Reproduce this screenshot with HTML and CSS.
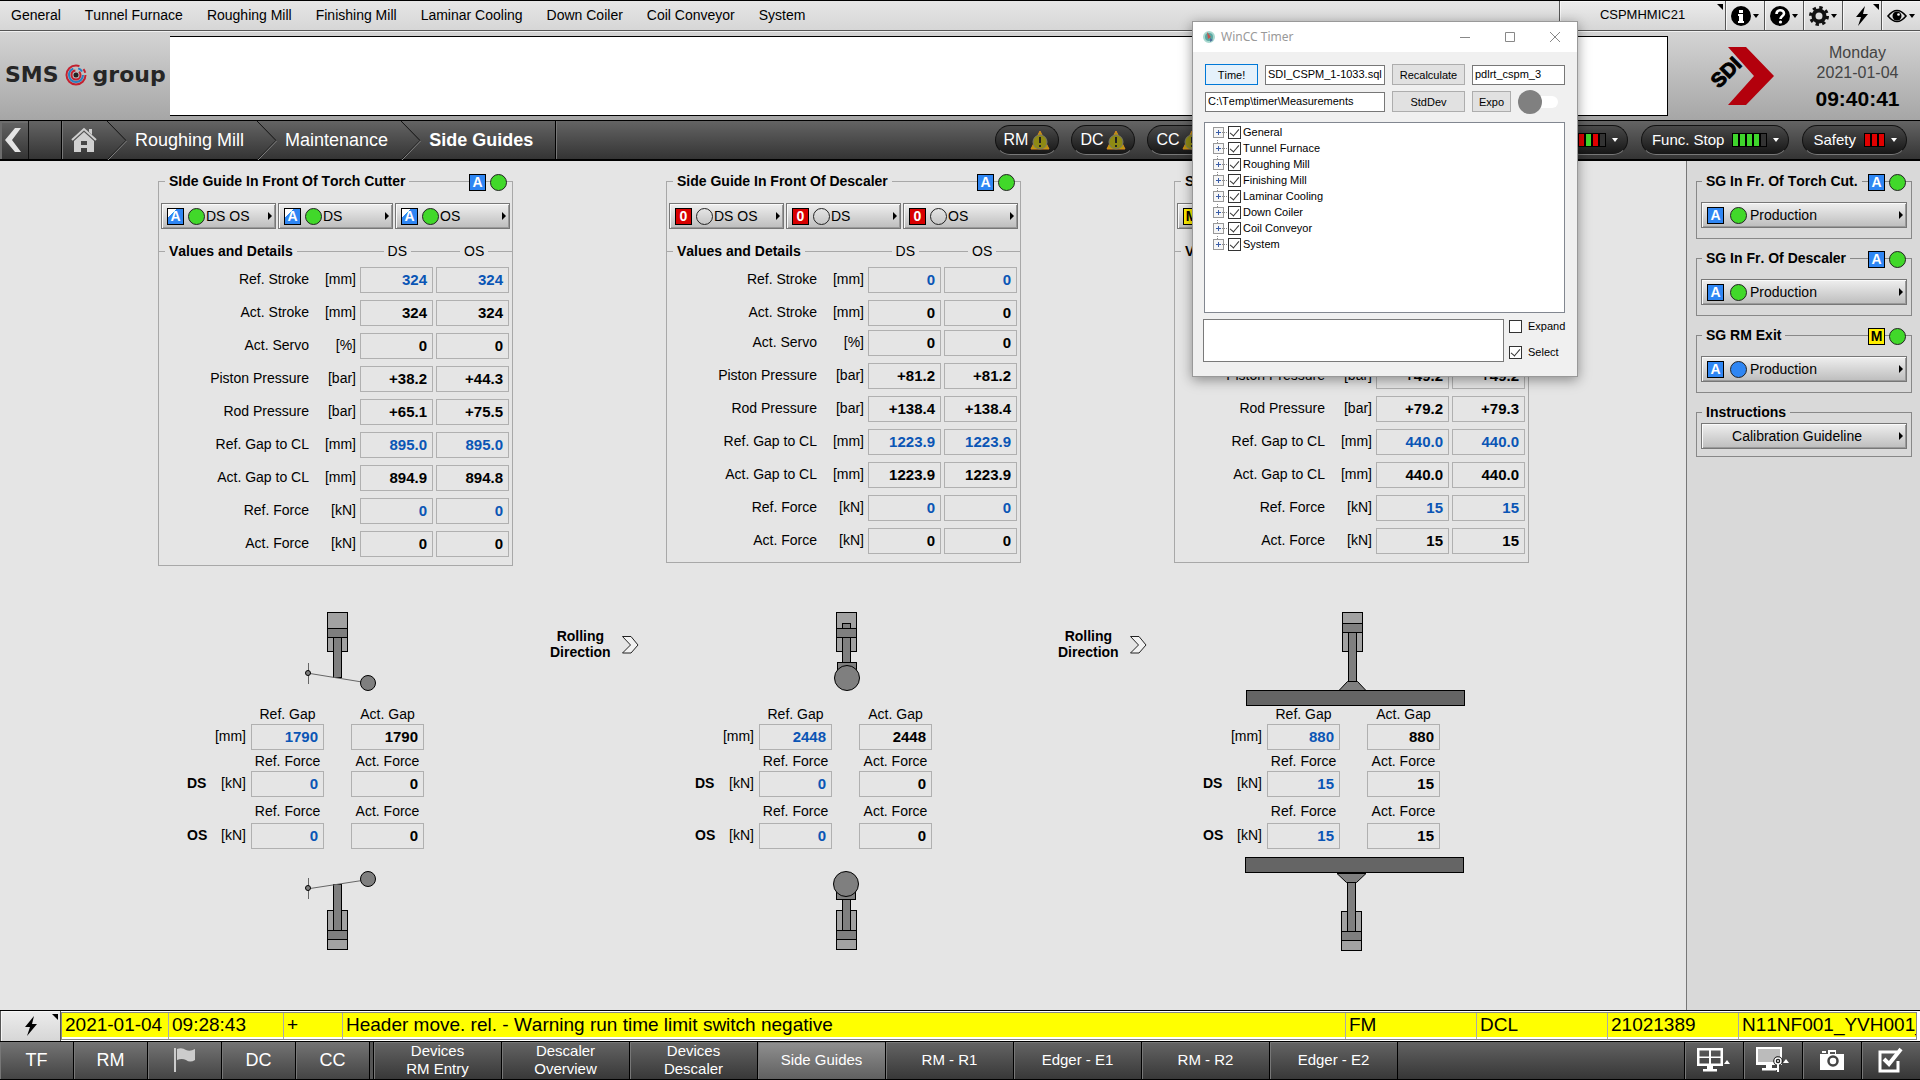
FILE: index.html
```html
<!DOCTYPE html>
<html lang="en">
<head>
<meta charset="utf-8">
<title>Side Guides</title>
<meta name="viewport" content="width=device-width, initial-scale=1">
<link rel="stylesheet" href="styles.css">
</head>
<body>
<svg class="defs" aria-hidden="true">
  <defs>
    <symbol id="warn" viewBox="0 0 20 20">
      <path d="M10 1 L19 19 H1 Z" fill="#b39a08" stroke="#d98a1e" stroke-width="1"/>
      <circle cx="10" cy="12" r="7" fill="#8f8a14" stroke="#77776a" stroke-width="1"/>
      <rect x="9" y="7" width="2" height="6" fill="#222"/><rect x="9" y="15" width="2" height="2" fill="#222"/>
    </symbol>
    <symbol id="bolt" viewBox="0 0 16 20">
      <path d="M11 0 L2 11 H7 L4 20 L14 8 H9 Z" fill="#000"/>
    </symbol>
    <symbol id="chevron" viewBox="0 0 20 39">
      <path d="M0 0 L19 19.500 L0 39" fill="none" stroke="#111"/>
      <path d="M1 39 L20 19.500" fill="none" stroke="#888"/>
    </symbol>
    <symbol id="rolling" viewBox="0 0 17 18">
      <path d="M.5 .5 H9 L16 9 L9 17 H.5 L8.500 9 Z" fill="#f2f2f2" stroke="#222"/>
    </symbol>
  </defs>
</svg>

<header>
  <div class="menubar">
    <nav class="menu" aria-label="Main menu">
      <a href="#">General</a><a href="#">Tunnel Furnace</a><a href="#">Roughing Mill</a><a href="#">Finishing Mill</a><a href="#">Laminar Cooling</a><a href="#">Down Coiler</a><a href="#">Coil Conveyor</a><a href="#">System</a>
    </nav>
    <button type="button" class="tool host corner">CSPMHMIC21</button>
    <button type="button" class="tool" aria-label="Information">
      <svg width="20" height="20" viewBox="0 0 20 20"><circle cx="10" cy="10" r="10"/><path d="M8 4h4v3H8zM7 8h5v7h1v2H7v-2h1v-5H7z" fill="#fff"/></svg><i class="down"></i>
    </button>
    <button type="button" class="tool" aria-label="Help">
      <svg width="20" height="20" viewBox="0 0 20 20"><circle cx="10" cy="10" r="10"/><path d="M6.500 8 C6.500 3 14 3 14 7.500 C14 10 10.500 10 10.500 13" fill="none" stroke="#fff" stroke-width="2.600"/><circle cx="10.500" cy="16" r="1.600" fill="#fff"/></svg><i class="down"></i>
    </button>
    <button type="button" class="tool" aria-label="Settings">
      <svg width="20" height="20" viewBox="0 0 20 20"><circle cx="10" cy="10" r="8.500" fill="none" stroke="#111" stroke-width="3" stroke-dasharray="3.340 3.340"/><circle cx="10" cy="10" r="5.500" fill="#ddd" stroke="#111" stroke-width="4"/></svg><i class="down"></i>
    </button>
    <button type="button" class="tool corner" aria-label="Events"><svg width="16" height="20"><use href="#bolt"/></svg></button>
    <button type="button" class="tool" aria-label="View">
      <svg width="20" height="14" viewBox="0 0 20 14"><path d="M1 7 Q10 -4 19 7 Q10 18 1 7Z" fill="none" stroke="#000" stroke-width="1.600"/><circle cx="10" cy="7" r="4.500"/><circle cx="11.500" cy="5.500" r="1.300" fill="#fff"/></svg><i class="down"></i>
    </button>
  </div>

  <div class="banner">
    <div class="sms">
      <span>SMS</span>
      <svg width="22" height="22" viewBox="0 0 22 22"><g fill="none" stroke-width="2"><circle cx="11" cy="11" r="9.500" stroke="#c4202f" stroke-dasharray="48 5 4 3"/><circle cx="11" cy="11" r="7" stroke="#2a7fc0" stroke-dasharray="30 5 5 4"/><circle cx="11" cy="11" r="4.500" stroke="#c4202f" stroke-dasharray="20 4"/></g><circle cx="11" cy="11" r="2.500" fill="#222"/></svg>
      <span>group</span>
    </div>
    <div class="message"></div>
    <svg class="sdi" width="72" height="60" viewBox="0 0 72 60" role="img" aria-label="SDI">
      <path d="M25 1 H43 L71 30 L43 59 H25 L51 30 Z" fill="#b3000c"/>
      <text x="16" y="43" transform="rotate(-45 16 43)" class="sdi-text">SDI</text>
    </svg>
    <div class="clock">
      <span>Monday</span><span>2021-01-04</span><strong>09:40:41</strong>
    </div>
  </div>

  <div class="navbar">
    <button type="button" class="back" aria-label="Back"><svg width="18" height="26" viewBox="0 0 18 26"><path d="M11 1 H17 L8 13 L17 25 H11 L1 13 Z" fill="#e4e4e4"/></svg></button>
    <div class="slot"></div>
    <nav class="crumbs" aria-label="Breadcrumb">
      <a href="#" class="home" aria-label="Home"><svg width="26" height="26" viewBox="0 0 26 26"><path d="M1 13 L13 2 L25 13" fill="none" stroke="#d0d0d0" stroke-width="2"/><path d="M18 2h3v6l-3-3z" fill="#d0d0d0"/><path d="M3 14 L13 5 L23 14 V25 H16 V21 H10 V25 H3 Z M10 14 V18 H16 V14 Z" fill="#d0d0d0" fill-rule="evenodd"/></svg></a>
      <svg width="20" height="39"><use href="#chevron"/></svg>
      <a href="#">Roughing Mill</a>
      <svg width="20" height="39"><use href="#chevron"/></svg>
      <a href="#">Maintenance</a>
      <svg width="20" height="39"><use href="#chevron"/></svg>
      <a href="#" class="here" aria-current="page">Side Guides</a>
    </nav>
    <div class="alerts">
      <button type="button" class="pill">RM<svg width="20" height="20"><use href="#warn"/></svg></button>
      <button type="button" class="pill">DC<svg width="20" height="20"><use href="#warn"/></svg></button>
      <button type="button" class="pill">CC<svg width="20" height="20"><use href="#warn"/></svg></button>
    </div>
    <div class="states">
      <button type="button" class="pill state" aria-label="Stops"><span class="bars"><b class="r"></b><b class="g"></b><b class="r"></b><b></b></span><i class="down"></i></button>
      <button type="button" class="pill state">Func. Stop<span class="bars"><b class="g"></b><b class="g"></b><b class="g"></b><b class="g"></b><b></b></span><i class="down"></i></button>
      <button type="button" class="pill state">Safety<span class="bars"><b class="r"></b><b class="r"></b><b class="r"></b></span><i class="down"></i></button>
    </div>
  </div>
</header>

<main>
  <div class="stage">
    <fieldset class="panel">
      <legend>SIde Guide In Front Of Torch Cutter</legend>
      <div class="badges"><span class="mode auto">A</span><span class="lamp on"></span></div>
      <div class="modes">
        <button type="button" class="key"><span class="mode auto cut">A</span><span class="lamp on"></span>DS OS</button>
        <button type="button" class="key"><span class="mode auto cut">A</span><span class="lamp on"></span>DS</button>
        <button type="button" class="key"><span class="mode auto cut">A</span><span class="lamp on"></span>OS</button>
      </div>
      <div class="heads"><strong>Values and Details</strong><span>DS</span><span>OS</span></div>
      <table class="values">
        <tr class="ref"><th scope="row">Ref. Stroke</th><td>[mm]</td><td><output>324</output></td><td><output>324</output></td></tr>
        <tr><th scope="row">Act. Stroke</th><td>[mm]</td><td><output>324</output></td><td><output>324</output></td></tr>
        <tr><th scope="row">Act. Servo</th><td>[%]</td><td><output>0</output></td><td><output>0</output></td></tr>
        <tr><th scope="row">Piston Pressure</th><td>[bar]</td><td><output>+38.2</output></td><td><output>+44.3</output></td></tr>
        <tr><th scope="row">Rod Pressure</th><td>[bar]</td><td><output>+65.1</output></td><td><output>+75.5</output></td></tr>
        <tr class="ref"><th scope="row">Ref. Gap to CL</th><td>[mm]</td><td><output>895.0</output></td><td><output>895.0</output></td></tr>
        <tr><th scope="row">Act. Gap to CL</th><td>[mm]</td><td><output>894.9</output></td><td><output>894.8</output></td></tr>
        <tr class="ref"><th scope="row">Ref. Force</th><td>[kN]</td><td><output>0</output></td><td><output>0</output></td></tr>
        <tr><th scope="row">Act. Force</th><td>[kN]</td><td><output>0</output></td><td><output>0</output></td></tr>
      </table>
    </fieldset>

    <fieldset class="panel">
      <legend>Side Guide In Front Of Descaler</legend>
      <div class="badges"><span class="mode auto">A</span><span class="lamp on"></span></div>
      <div class="modes">
        <button type="button" class="key"><span class="mode zero">0</span><span class="lamp"></span>DS OS</button>
        <button type="button" class="key"><span class="mode zero">0</span><span class="lamp"></span>DS</button>
        <button type="button" class="key"><span class="mode zero">0</span><span class="lamp"></span>OS</button>
      </div>
      <div class="heads"><strong>Values and Details</strong><span>DS</span><span>OS</span></div>
      <table class="values dense">
        <tr class="ref"><th scope="row">Ref. Stroke</th><td>[mm]</td><td><output>0</output></td><td><output>0</output></td></tr>
        <tr><th scope="row">Act. Stroke</th><td>[mm]</td><td><output>0</output></td><td><output>0</output></td></tr>
        <tr><th scope="row">Act. Servo</th><td>[%]</td><td><output>0</output></td><td><output>0</output></td></tr>
        <tr><th scope="row">Piston Pressure</th><td>[bar]</td><td><output>+81.2</output></td><td><output>+81.2</output></td></tr>
        <tr><th scope="row">Rod Pressure</th><td>[bar]</td><td><output>+138.4</output></td><td><output>+138.4</output></td></tr>
        <tr class="ref"><th scope="row">Ref. Gap to CL</th><td>[mm]</td><td><output>1223.9</output></td><td><output>1223.9</output></td></tr>
        <tr><th scope="row">Act. Gap to CL</th><td>[mm]</td><td><output>1223.9</output></td><td><output>1223.9</output></td></tr>
        <tr class="ref"><th scope="row">Ref. Force</th><td>[kN]</td><td><output>0</output></td><td><output>0</output></td></tr>
        <tr><th scope="row">Act. Force</th><td>[kN]</td><td><output>0</output></td><td><output>0</output></td></tr>
      </table>
    </fieldset>

    <fieldset class="panel">
      <legend>Side Guide RM Exit</legend>
      <div class="badges"><span class="mode manual">M</span><span class="lamp on"></span></div>
      <div class="modes">
        <button type="button" class="key"><span class="mode manual">M</span><span class="lamp on"></span>DS OS</button>
        <button type="button" class="key"><span class="mode manual">M</span><span class="lamp on"></span>DS</button>
        <button type="button" class="key"><span class="mode manual">M</span><span class="lamp on"></span>OS</button>
      </div>
      <div class="heads"><strong>Values and Details</strong><span>DS</span><span>OS</span></div>
      <table class="values dense">
        <tr class="ref"><th scope="row">Ref. Stroke</th><td>[mm]</td><td><output></output></td><td><output></output></td></tr>
        <tr><th scope="row">Act. Stroke</th><td>[mm]</td><td><output></output></td><td><output></output></td></tr>
        <tr><th scope="row">Act. Servo</th><td>[%]</td><td><output></output></td><td><output></output></td></tr>
        <tr><th scope="row">Piston Pressure</th><td>[bar]</td><td><output>+49.2</output></td><td><output>+49.2</output></td></tr>
        <tr><th scope="row">Rod Pressure</th><td>[bar]</td><td><output>+79.2</output></td><td><output>+79.3</output></td></tr>
        <tr class="ref"><th scope="row">Ref. Gap to CL</th><td>[mm]</td><td><output>440.0</output></td><td><output>440.0</output></td></tr>
        <tr><th scope="row">Act. Gap to CL</th><td>[mm]</td><td><output>440.0</output></td><td><output>440.0</output></td></tr>
        <tr class="ref"><th scope="row">Ref. Force</th><td>[kN]</td><td><output>15</output></td><td><output>15</output></td></tr>
        <tr><th scope="row">Act. Force</th><td>[kN]</td><td><output>15</output></td><td><output>15</output></td></tr>
      </table>
    </fieldset>

    <section class="station">
      <div class="machine">
        <svg class="drawing" width="300" height="91" viewBox="0 0 300 91">
          <g class="part">
            <rect class="cyl" x="169.500" y=".5" width="20" height="39"/><rect x="175.500" y="25.500" width="8" height="40"/><rect x="169.500" y="16.500" width="20" height="9"/>
            <path class="thin" d="M150.500 51v21M152 61.500 L204 70"/><circle cx="150" cy="61" r="2.500"/><circle cx="210" cy="71" r="7.500"/>
          </g>
        </svg>
        <dl class="gaps">
          <dt>Ref. Gap</dt><dt>Act. Gap</dt><dd class="unit">[mm]</dd><dd><output class="ref">1790</output></dd><dd><output>1790</output></dd>
          <dt>Ref. Force</dt><dt>Act. Force</dt><dd class="side">DS</dd><dd class="unit">[kN]</dd><dd><output class="ref">0</output></dd><dd><output>0</output></dd>
          <dt class="low">Ref. Force</dt><dt class="low">Act. Force</dt><dd class="side">OS</dd><dd class="unit">[kN]</dd><dd><output class="ref">0</output></dd><dd><output>0</output></dd>
        </dl>
        <svg class="drawing" width="300" height="104" viewBox="0 0 300 104">
          <g class="part">
            <rect class="cyl" x="169.500" y="61.500" width="20" height="39"/><rect x="175.500" y="35.500" width="8" height="46"/><rect x="169.500" y="81.500" width="20" height="9"/>
            <path class="thin" d="M150.500 29v21M152 39.500 L204 31.500"/><circle cx="150" cy="39" r="2.500"/><circle cx="210" cy="30" r="7.500"/>
          </g>
        </svg>
      </div>
      <p class="rolling">Rolling<br>Direction<svg width="17" height="18"><use href="#rolling"/></svg></p>
    </section>

    <section class="station">
      <div class="machine">
        <svg class="drawing" width="300" height="91" viewBox="0 0 300 91">
          <g class="part">
            <rect class="cyl" x="170.500" y=".5" width="20" height="39"/><rect x="176.500" y="11.500" width="8" height="40"/><rect x="170.500" y="16.500" width="20" height="9"/>
            <rect x="171.500" y="50.500" width="19" height="10"/><circle cx="181" cy="66" r="12.500"/>
          </g>
        </svg>
        <dl class="gaps">
          <dt>Ref. Gap</dt><dt>Act. Gap</dt><dd class="unit">[mm]</dd><dd><output class="ref">2448</output></dd><dd><output>2448</output></dd>
          <dt>Ref. Force</dt><dt>Act. Force</dt><dd class="side">DS</dd><dd class="unit">[kN]</dd><dd><output class="ref">0</output></dd><dd><output>0</output></dd>
          <dt class="low">Ref. Force</dt><dt class="low">Act. Force</dt><dd class="side">OS</dd><dd class="unit">[kN]</dd><dd><output class="ref">0</output></dd><dd><output>0</output></dd>
        </dl>
        <svg class="drawing" width="300" height="104" viewBox="0 0 300 104">
          <g class="part">
            <rect class="cyl" x="170.500" y="61.500" width="20" height="39"/><rect x="176.500" y="50.500" width="8" height="31"/><rect x="170.500" y="81.500" width="20" height="9"/>
            <rect x="170.500" y="40.500" width="19" height="10"/><circle cx="180" cy="35" r="12.500"/>
          </g>
        </svg>
      </div>
      <p class="rolling">Rolling<br>Direction<svg width="17" height="18"><use href="#rolling"/></svg></p>
    </section>

    <section class="station">
      <div class="machine">
        <svg class="drawing" width="300" height="91" viewBox="0 0 300 91">
          <g class="part">
            <rect class="cyl" x="168.500" y=".5" width="20" height="39"/><rect x="174.500" y="20.500" width="8" height="49"/><rect x="168.500" y="11.500" width="20" height="9"/>
            <path d="M173.500 69.500 H183.500 L192 78.500 H165 Z"/><rect class="plate" x="72.500" y="78.500" width="218" height="15"/>
          </g>
        </svg>
        <dl class="gaps">
          <dt>Ref. Gap</dt><dt>Act. Gap</dt><dd class="unit">[mm]</dd><dd><output class="ref">880</output></dd><dd><output>880</output></dd>
          <dt>Ref. Force</dt><dt>Act. Force</dt><dd class="side">DS</dd><dd class="unit">[kN]</dd><dd><output class="ref">15</output></dd><dd><output>15</output></dd>
          <dt class="low">Ref. Force</dt><dt class="low">Act. Force</dt><dd class="side">OS</dd><dd class="unit">[kN]</dd><dd><output class="ref">15</output></dd><dd><output>15</output></dd>
        </dl>
        <svg class="drawing" width="300" height="104" viewBox="0 0 300 104">
          <g class="part">
            <rect class="cyl" x="167.500" y="62.500" width="20" height="39"/><rect x="173.500" y="33.500" width="8" height="49"/><rect x="167.500" y="82.500" width="20" height="9"/>
            <path d="M163 24.500 H192 L182.500 33.500 H172.500 Z"/><rect class="plate" x="71.500" y="8.500" width="218" height="15"/>
          </g>
        </svg>
      </div>
    </section>
  </div>

  <aside>
    <fieldset class="group">
      <legend>SG In Fr. Of Torch Cut.</legend>
      <div class="badges"><span class="mode auto">A</span><span class="lamp on"></span></div>
      <button type="button" class="key wide"><span class="mode auto">A</span><span class="lamp on"></span>Production</button>
    </fieldset>
    <fieldset class="group">
      <legend>SG In Fr. Of Descaler</legend>
      <div class="badges"><span class="mode auto">A</span><span class="lamp on"></span></div>
      <button type="button" class="key wide"><span class="mode auto">A</span><span class="lamp on"></span>Production</button>
    </fieldset>
    <fieldset class="group">
      <legend>SG RM Exit</legend>
      <div class="badges"><span class="mode manual">M</span><span class="lamp on"></span></div>
      <button type="button" class="key wide"><span class="mode auto">A</span><span class="lamp run"></span>Production</button>
    </fieldset>
    <fieldset class="group plain">
      <legend>Instructions</legend>
      <button type="button" class="key wide centred">Calibration Guideline</button>
    </fieldset>
  </aside>
</main>

<footer>
  <div class="alarm">
    <button type="button" class="tool ack corner" aria-label="Alarms"><svg width="16" height="20"><use href="#bolt"/></svg></button>
    <table class="log">
      <tr><td>2021-01-04</td><td>09:28:43</td><td>+</td><td>Header move. rel. - Warning run time limit switch negative</td><td>FM</td><td>DCL</td><td>21021389</td><td>N11NF001_YVH001_</td></tr>
    </table>
  </div>
  <nav class="tabs" aria-label="Screens">
    <button type="button" class="area">TF</button>
    <button type="button" class="area">RM</button>
    <button type="button" class="area" aria-label="Flag"><svg width="24" height="26" viewBox="0 0 24 26"><path d="M2 1v24" stroke="#ccc" stroke-width="2"/><path d="M4 2 Q9 0 13 3 Q17 5 22 2 V13 Q17 16 13 13 Q9 11 4 13 Z" fill="#ccc"/></svg></button>
    <button type="button" class="area">DC</button>
    <button type="button" class="area">CC</button>
    <i class="divider"></i>
    <button type="button" class="page">Devices<br>RM Entry</button>
    <button type="button" class="page">Descaler<br>Overview</button>
    <button type="button" class="page">Devices<br>Descaler</button>
    <button type="button" class="page active" aria-current="page">Side Guides</button>
    <button type="button" class="page">RM - R1</button>
    <button type="button" class="page">Edger - E1</button>
    <button type="button" class="page">RM - R2</button>
    <button type="button" class="page">Edger - E2</button>
    <span class="fill"></span>
    <button type="button" class="icon" aria-label="Screen layout"><svg width="34" height="24" viewBox="0 0 34 24"><path d="M0 0h26v18H0z M2.500 2.500v6h9.500v-6z M14 2.500v6h9.500v-6z M2.500 10v5.500h9.500V10z M14 10v5.500h9.500V10z M10 18h6v3h4v2.500H6V21h4z" fill="#fff" fill-rule="evenodd"/><path d="M27 16h6l-3-4z" fill="#fff"/></svg></button>
    <button type="button" class="icon" aria-label="Screen access"><svg width="34" height="26" viewBox="0 0 34 26"><path d="M0 0h26v18H0z M10 18h6v3h4v2.500H6V21h4z" fill="#fff"/><path d="M2 2h22v13H2z" fill="#bbb"/><circle cx="22" cy="14" r="3" fill="#bbb" stroke="#111" stroke-width="3.500"/><circle cx="22" cy="14" r="3" fill="none" stroke="#fff" stroke-width="1.500"/><path d="M22 17v8M22 22h-3" stroke="#fff" stroke-width="2"/><path d="M27 16h6l-3-4z" fill="#fff"/></svg></button>
    <button type="button" class="icon" aria-label="Screenshot"><svg width="26" height="22" viewBox="0 0 26 22"><path d="M1 5h8V1h8v4h8v16H1z" fill="#fff"/><path d="M11 3h5v2h-5z" fill="#555"/><path d="M3 2h4v2H3z" fill="#fff"/><circle cx="14" cy="12" r="4.500" fill="#fff" stroke="#444" stroke-width="2.500"/></svg></button>
    <button type="button" class="icon" aria-label="Confirm"><svg width="26" height="26" viewBox="0 0 26 26"><path d="M19 5H2V24H20V14" fill="none" stroke="#fff" stroke-width="3"/><path d="M6 12l5 5L23 2" fill="none" stroke="#fff" stroke-width="4"/></svg></button>
  </nav>
</footer>

<section class="window" role="dialog" aria-labelledby="window-title">
  <div class="titlebar">
    <svg width="14" height="14" viewBox="0 0 14 14"><circle cx="7" cy="7" r="5" fill="#5aa7a2" stroke="#a8d8cf" stroke-width="2"/><path d="M5 2l4 5-3 2z" fill="#c8534a"/><path d="M8 8l3 2-3 2z" fill="#4c6f9a"/></svg>
    <h2 id="window-title">WinCC Timer</h2>
    <button type="button" aria-label="Minimize"><svg width="10" height="10"><path d="M0 5.500h10"/></svg></button>
    <button type="button" aria-label="Maximize"><svg width="10" height="10"><path d="M.5 .5h9v9h-9z"/></svg></button>
    <button type="button" aria-label="Close"><svg width="10" height="10"><path d="M0 0l10 10M10 0L0 10"/></svg></button>
  </div>
  <form class="body">
    <div class="fields">
      <button type="button" class="btn focus">Time!</button>
      <input type="text" value="SDI_CSPM_1-1033.sql" aria-label="Script file">
      <button type="button" class="btn">Recalculate</button>
      <input type="text" value="pdlrt_cspm_3" aria-label="Database">
      <input type="text" class="path" value="C:\Temp\timer\Measurements" aria-label="Folder">
      <button type="button" class="btn">StdDev</button>
      <div class="export"><button type="button" class="btn">Expo</button><input type="checkbox" class="switch" role="switch" aria-label="Timer"></div>
    </div>
    <ul class="tree">
      <li><label><input type="checkbox" checked>General</label></li>
      <li><label><input type="checkbox" checked>Tunnel Furnace</label></li>
      <li><label><input type="checkbox" checked>Roughing Mill</label></li>
      <li><label><input type="checkbox" checked>Finishing Mill</label></li>
      <li><label><input type="checkbox" checked>Laminar Cooling</label></li>
      <li><label><input type="checkbox" checked>Down Coiler</label></li>
      <li><label><input type="checkbox" checked>Coil Conveyor</label></li>
      <li><label><input type="checkbox" checked>System</label></li>
    </ul>
    <div class="result">
      <textarea aria-label="Result"></textarea>
      <div class="options">
        <label><input type="checkbox">Expand</label>
        <label><input type="checkbox" checked>Select</label>
      </div>
    </div>
  </form>
</section>
</body>
</html>
```

FILE: styles.css
```css
* { box-sizing: border-box; }

body {
  margin: 0;
  min-height: 100vh;
  display: flex;
  flex-direction: column;
  background: #e5e5e5;
  color: #000;
  font: 14px/16px "Liberation Sans", Arial, sans-serif;
  font-kerning: none;
  overflow-x: hidden;
}

button, input, textarea { font: inherit; font-kerning: none; color: inherit; margin: 0; }
button { padding: 0; border: 0; background: none; }
a { color: inherit; text-decoration: none; }
fieldset { margin: 0; min-width: 0; position: relative; }
svg { display: block; flex: none; overflow: visible; }
.defs { position: absolute; width: 0; height: 0; }

/* Menu bar */
.menubar {
  display: flex;
  height: 31px;
  border-top: 1px solid #000;
  border-bottom: 1px solid #555;
  background: linear-gradient(#e6e6e6, #d6d6d6);
}
.menu { flex: 1; display: flex; align-items: center; gap: 24px; padding: 0 0 2px 11px; white-space: nowrap; }
.tool {
  display: flex;
  align-items: center;
  justify-content: center;
  gap: 2px;
  position: relative;
  width: 39px;
  border-left: 1px solid #555;
  background: linear-gradient(#ececec, #d6d6d6);
  box-shadow: inset 1px 1px #f6f6f6;
}
.tool.host { width: 166px; font-size: 13px; padding-bottom: 1px; }
.tool.corner::after {
  content: "";
  position: absolute;
  top: 3px;
  right: 2px;
  border: 3px solid #000;
  border-left-color: transparent;
  border-bottom-color: transparent;
}
.down { border: 3px solid transparent; border-top: 4px solid currentColor; border-bottom: 0; }

/* Banner */
.banner {
  display: flex;
  height: 89px;
  padding-top: 4px;
  border-top: 1px solid #f0f0f0;
  background: linear-gradient(#d4d4d4, #a6a6a6);
}
.sms { width: 170px; padding: 0 0 6px 5px; display: flex; align-items: center; gap: 6px; font: bold 22px/28px "DejaVu Sans", sans-serif; color: #262626; }
.message { flex: 1; height: 80px; background: #fff; border: 1px solid #000; border-left: 0; }
.sdi { margin: 10px 0 0 35px; }
.sdi-text { font: bold 20px "Liberation Sans", Arial, sans-serif; stroke: #000; stroke-width: 1px; }
.clock { width: 145px; padding: 7px 0 0 20px; display: flex; flex-direction: column; align-items: center; font-size: 16px; line-height: 20px; color: #444; }
.clock strong { font-size: 21px; line-height: 32px; color: #000; }

/* Navigation bar */
.navbar {
  display: flex;
  height: 41px;
  border-top: 1px solid #000;
  border-bottom: 2px solid #000;
  background: linear-gradient(#646464, #343434);
  color: #fff;
}
.back { width: 29px; display: flex; align-items: center; padding-left: 4px; border-right: 1px solid #111; box-shadow: inset 2px 2px #6d6d6d; }
.slot { width: 33px; border-right: 1px solid #000; }
.crumbs { display: flex; align-items: center; flex: 1; font-size: 18px; white-space: nowrap; border-left: 1px solid #777; }
.crumbs a { padding: 0 13px 0 8px; }
.crumbs .home { padding: 0 10px 0 8px; }
.crumbs .here { font-weight: bold; padding-right: 22px; line-height: 38px; border-right: 1px solid #000; box-shadow: 1px 0 #777; }
.alerts, .states { display: flex; align-items: center; gap: 12px; }
.alerts { width: 215px; }
.states { gap: 13px; width: 710px; justify-content: flex-end; padding-right: 13px; }
.pill {
  display: flex;
  align-items: center;
  justify-content: center;
  gap: 2px;
  width: 64px;
  height: 30px;
  flex: none;
  border: 1px solid #111;
  border-bottom-color: #777;
  border-radius: 15px;
  background: linear-gradient(#4a4a4a, #161616);
  font-size: 16px;
  white-space: nowrap;
}
.pill.state { width: auto; padding: 0 9px 0 10px; gap: 6px; font-size: 15px; }
.bars { display: flex; margin-left: 2px; }
.bars b { width: 7px; height: 14px; border: 1px solid #000; background: #333; }
.bars .g { background: #3fd62c; }
.bars .r { background: #e10000; }

/* Work area */
main { flex: 1; display: flex; }
.stage {
  flex: 1;
  display: grid;
  grid-template-columns: repeat(3, 1fr);
  align-content: start;
  align-items: start;
  row-gap: 46px;
  padding: 12px 4px 0 158px;
}
.panel { width: 355px; padding: 14px 0 1px; border: 1px solid #a8a8a8; }
legend { margin-left: 6px; padding: 0 4px; font-weight: bold; }
.badges { position: absolute; top: -15px; right: 5px; display: flex; gap: 4px; }
.badges .lamp { margin-left: 0; }

.mode {
  width: 17px;
  height: 17px;
  border: 1px solid #000;
  font-weight: bold;
  line-height: 15px;
  text-align: center;
  color: #fff;
}
.auto { background: #2f86f3; }
.cut { background: linear-gradient(135deg, #fff 28%, #2f86f3 30%); }
.zero { background: #d80000; }
.manual { background: #ffee00; color: #000; }
.lamp { width: 17px; height: 17px; margin-left: 3px; border: 1px solid #222; border-radius: 50%; }
.lamp.on { background: #41d82a; }
.lamp.run { background: #2f86f3; }

.modes { display: flex; gap: 2px; padding: 0 2px; }
.key {
  position: relative;
  flex: 1;
  display: flex;
  align-items: center;
  gap: 1px;
  height: 26px;
  padding-left: 5px;
  border: 1px solid #777;
  background: linear-gradient(#efefef, #bdbdbd);
  box-shadow: inset 1px 1px #fafafa, inset -1px -1px #999;
}
.key::after {
  content: "";
  position: absolute;
  right: 3px;
  top: 8px;
  border: 4px solid transparent;
  border-left-color: #000;
  border-right: 0;
}
.key.wide { width: 100%; gap: 3px; }
.key.centred { justify-content: center; padding: 0 14px 0 0; }

.heads { display: flex; align-items: center; margin: 14px 0 8px; }
.heads::before { content: ""; width: 6px; height: 1px; background: #a8a8a8; }
.heads strong { padding: 0 4px; }
.heads span { display: flex; align-items: center; gap: 4px; }
.heads span::before, .heads span::after { content: ""; height: 1px; background: #a8a8a8; }
.heads strong + span { flex: 1; margin-right: 4px; }
.heads strong + span::before { flex: 1; }
.heads strong + span::after { width: 49px; }
.heads span:last-child { width: 48px; }
.heads span:last-child::before { content: none; }
.heads span:last-child::after { flex: 1; }

.values { width: 100%; border-collapse: collapse; }
.values th, .values td { padding: 0 0 9px; font-weight: normal; text-align: right; }
.values td:nth-child(2) { width: 48px; padding-right: 1px; }
.values td:nth-child(n+3) { width: 76px; padding: 0 0 7px 3px; }
.values td:last-child { width: 79px; padding-right: 3px; }
.dense tr:nth-child(2) > th, .dense tr:nth-child(2) > td:nth-child(2) { padding-bottom: 6px; }
.dense tr:nth-child(2) > td:nth-child(n+3) { padding-bottom: 4px; }
output {
  display: block;
  height: 26px;
  padding-right: 5px;
  border: 1px solid #b0b0b0;
  font-size: 15px;
  font-weight: bold;
  line-height: 24px;
  text-align: right;
}
.ref output, output.ref { color: #0a55b5; }

/* Machine drawings */
.station { display: flex; }
.machine { width: 300px; }
.part { fill: #7f7f7f; stroke: #000; }
.part .cyl { fill: #a2a2a2; }
.part .plate { fill: #656565; }
.part .thin { fill: none; stroke: #666; }
.gaps { display: grid; grid-template-columns: 29px 21px 38px 78px 100px; margin: 0; align-items: center; }
.gaps dt { height: 21px; line-height: 22px; text-align: center; white-space: nowrap; }
.gaps dt.low { height: 26px; line-height: 28px; }
.gaps dd { margin: 0; }
.gaps dt:nth-of-type(odd), .gaps .unit + dd { grid-column: 4; padding-left: 5px; }
.gaps dt:nth-of-type(even), .gaps .unit + dd + dd { grid-column: 5; padding-left: 27px; }
.gaps dd.side { grid-column: 2; font-weight: bold; padding-bottom: 2px; }
.gaps dd.unit { grid-column: 3; text-align: right; padding-bottom: 2px; }
.rolling { position: relative; margin: 16px 0 0 92px; height: 32px; font-weight: bold; text-align: center; }
.rolling svg { position: absolute; left: 72px; top: 8px; }

/* Side panel */
aside { width: 234px; padding: 12px 8px 0 9px; border-left: 1px solid #777; background: #d9d9d9; display: flex; flex-direction: column; gap: 11px; }
.group { padding: 13px 4px 10px; border: 1px solid #888; }
.group legend { margin-left: 1px; }
.group.plain { padding: 3px 4px 7px; }

/* Alarm line */
.alarm { display: flex; height: 31px; border-top: 1px solid #000; background: #fff; }
.ack { width: 61px; border-right: 1px solid #555; }
.log { flex: 1; margin: 1px 3px 1px 0; border: 1px solid #888; border-collapse: separate; border-spacing: 0; table-layout: fixed; width: 0; font-size: 19px; line-height: 23px; height: 28px; }
.log td { padding: 0 0 3px 3px; border-right: 1px solid #aaa; overflow: hidden; white-space: nowrap; background: linear-gradient(#ff0 24px, #fff 24px); }
.log td:nth-child(1) { width: 107px; }
.log td:nth-child(2) { width: 115px; }
.log td:nth-child(3) { width: 59px; }
.log td:nth-child(n+5) { width: 131px; }
.log td:last-child { width: 177px; border-right: 0; }

/* Screen tabs */
.tabs { display: flex; height: 39px; border-top: 1px solid #000; border-bottom: 1px solid #000; background: linear-gradient(#626262, #363636); color: #fff; }
.tabs button { display: flex; align-items: center; justify-content: center; padding-bottom: 2px; border-right: 1px solid #000; box-shadow: inset 1px 1px #777; white-space: nowrap; }
.area { width: 74px; font-size: 18px; background: linear-gradient(#747474, #444); }
.divider { width: 4px; border-right: 1px solid #000; background: #555; }
.page { width: 128px; font-size: 15px; line-height: 18px; background: linear-gradient(#646464, #383838); }
.page.active { background: linear-gradient(#909090, #606060); }
.fill { flex: 1; }
.tabs .icon { width: 59px; border-left: 1px solid #000; border-right: 0; }

/* Floating window */
.window {
  position: absolute;
  left: 1192px;
  top: 21px;
  width: 386px;
  border: 1px solid #999;
  background: #f0f0f0;
  box-shadow: 0 3px 12px rgba(0, 0, 0, .4);
  font-size: 11px;
  line-height: 14px;
}
.titlebar { display: flex; align-items: center; height: 30px; padding-left: 9px; background: #fff; color: #999; }
.titlebar h2 { flex: 1; margin: 0 0 0 5px; font: 12px/16px "Noto Sans", sans-serif; }
.titlebar button { width: 45px; display: flex; justify-content: center; }
.titlebar button path { fill: none; stroke: #888; }
.body { padding: 12px 12px 14px; }
.fields { display: grid; grid-template-columns: 53px 120px 73px 1fr; gap: 6px 7px; align-items: center; }
.btn { height: 21px; border: 1px solid #adadad; background: #e1e1e1; }
.btn.focus { border-color: #0078d7; background: #e5f1fb; }
.fields input[type="text"] { width: 100%; min-width: 0; height: 20px; padding: 0 2px 2px; border: 1px solid #777; background: #fff; }
.fields .path { grid-column: span 2; }
.export { display: flex; align-items: center; gap: 7px; height: 21px; }
.export .btn { width: 39px; }
input[type="checkbox"] {
  appearance: none;
  position: relative;
  width: 13px;
  height: 13px;
  flex: none;
  border: 1px solid #333;
  background: #fff;
}
input[type="checkbox"]:checked::after {
  content: "";
  position: absolute;
  left: 3px;
  top: 0;
  width: 4px;
  height: 8px;
  border: solid #333;
  border-width: 0 1px 1px 0;
  transform: rotate(40deg);
}
.body .export .switch { width: 40px; height: 12px; border: 0; border-radius: 6px; }
.body .switch::before { content: ""; position: absolute; left: 0; top: -6px; width: 24px; height: 24px; border-radius: 50%; background: #808080; }
.tree { height: 191px; margin: 10px 0 6px -1px; padding: 1px 0 0 8px; border: 1px solid #828790; background: #fff; list-style: none; }
.tree li { position: relative; display: flex; align-items: center; height: 16px; }
.tree li::before {
  content: "";
  width: 9px;
  height: 9px;
  border: 1px solid #999;
  background: linear-gradient(#3b5ea8, #3b5ea8) center / 5px 1px no-repeat, linear-gradient(#3b5ea8, #3b5ea8) center / 1px 5px no-repeat, #f6f6f6;
}
.tree li::after { content: ""; position: absolute; left: 9px; top: 8px; width: 5px; border-top: 1px dotted #888; }
.tree li + li { background: repeating-linear-gradient(#888 0 1px, #fff 1px 2px) 4px 0 / 1px 4px no-repeat; }
.tree label { display: flex; align-items: center; gap: 2px; margin-left: 4px; }
.result { display: flex; gap: 5px; margin-left: -2px; }
.result textarea { flex: 1; height: 43px; min-width: 0; border: 1px solid #7a7a7a; background: #fff; resize: none; }
.options { width: 56px; display: flex; flex-direction: column; gap: 12px; white-space: nowrap; }
.options label { display: flex; align-items: center; gap: 6px; }
```
